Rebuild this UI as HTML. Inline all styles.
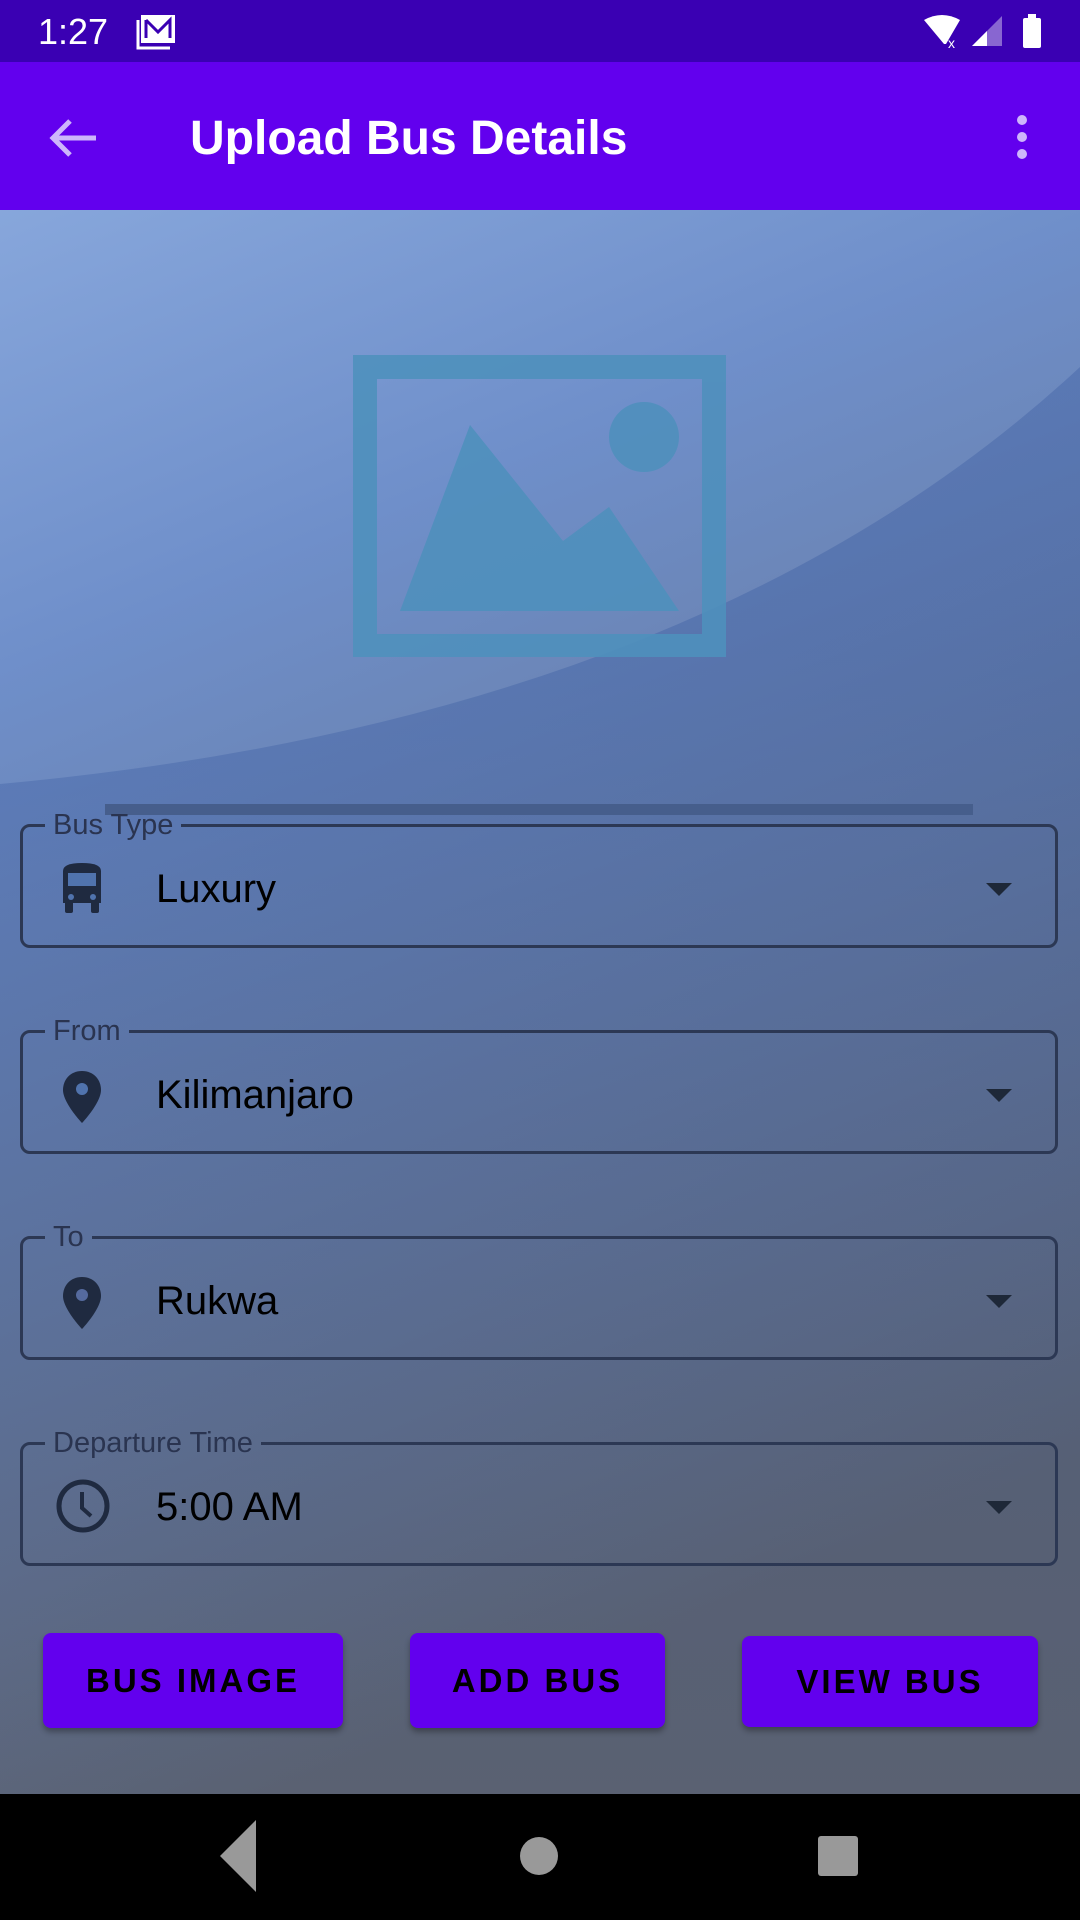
<!DOCTYPE html>
<html><head><meta charset="utf-8"><style>
*{margin:0;padding:0;box-sizing:border-box}
body{width:1080px;height:1920px;position:relative;overflow:hidden;font-family:"Liberation Sans",sans-serif;background:#000}
.abs{position:absolute}
.field{position:absolute;left:20px;width:1038px;height:123px}
fieldset{position:absolute;left:0;right:0;top:-17px;bottom:0;border:3px solid #2c3854;border-radius:10px;padding:0 20px}
legend{padding:0 8px;font-size:29px;color:#2a3450;line-height:34px;margin-left:2px}
.val{position:absolute;left:136px;top:41px;font-size:40px;color:#000;line-height:46px}
.arr{position:absolute;left:966px;top:58px;width:0;height:0;border-left:13px solid transparent;border-right:13px solid transparent;border-top:13px solid #1e2838}
.ic{position:absolute;left:39px;top:38px}
.btn{position:absolute;background:#6200ee;border-radius:8px;box-shadow:0 4px 6px rgba(0,0,0,.3);color:#000;font-size:33px;font-weight:bold;letter-spacing:3px;display:flex;align-items:center;justify-content:center}
</style></head><body>
<svg class="abs" style="left:0;top:0" width="1080" height="1794">
<defs><linearGradient id="g" x1="0" y1="0" x2="0.25" y2="1">
<stop offset="0" stop-color="#92b1e3"/><stop offset="0.35" stop-color="#6f8fca"/><stop offset="1" stop-color="#5c6270"/></linearGradient>
<linearGradient id="o" x1="0" y1="0" x2="0" y2="1"><stop offset="0.2" stop-color="#2c4f9a" stop-opacity="0.3"/><stop offset="1" stop-color="#2c4f9a" stop-opacity="0.05"/></linearGradient></defs>
<rect width="1080" height="1794" fill="url(#g)"/>
<path d="M0,784 Q700,720 1080,367 L1080,1794 L0,1794Z" fill="url(#o)"/>
</svg>
<div class="abs" style="left:0;top:0;width:1080px;height:62px;background:#3a00b3"></div>
<div class="abs" style="left:38px;top:10px;font-size:36px;color:#fff;line-height:44px">1:27</div>
<svg class="abs" style="left:136px;top:15px" width="42" height="36"><rect x="5" y="0" width="34" height="28" fill="#fff"/><path d="M10,5 L10,23 M10,5 L22,17 L34,5 L34,23" stroke="#3a00b3" stroke-width="3" fill="none"/><path d="M2,5 L2,33 L34,33" stroke="#fff" stroke-width="3" fill="none"/></svg>
<svg class="abs" style="left:922px;top:14px" width="120" height="36"><path d="M2,6 Q20,-4 38,6 L24,30 L22,30Z" fill="#fff"/><text x="26" y="34" font-size="14" fill="#fff" font-family="Liberation Sans">x</text><path d="M50,32 L80,2 L80,32Z" fill="#fff" opacity="0.4"/><path d="M50,32 L65,17 L65,32Z" fill="#fff"/><rect x="101" y="4" width="18" height="30" rx="2" fill="#fff"/><rect x="106" y="0" width="8" height="5" fill="#fff"/></svg>
<div class="abs" style="left:0;top:62px;width:1080px;height:148px;background:#6200ee"></div>
<svg class="abs" style="left:48px;top:118px" width="52" height="40"><path d="M4,20 L48,20 M22,3 L5,20 L22,37" stroke="#cdb6fb" stroke-width="5" fill="none"/></svg>
<div class="abs" style="left:190px;top:109px;font-size:48px;font-weight:bold;color:#fff;line-height:60px">Upload Bus Details</div>
<svg class="abs" style="left:1012px;top:114px" width="20" height="46"><circle cx="10" cy="6" r="5" fill="#cdb6fb"/><circle cx="10" cy="23" r="5" fill="#cdb6fb"/><circle cx="10" cy="40" r="5" fill="#cdb6fb"/></svg>
<svg class="abs" style="left:0;top:0" width="1080" height="700"><g fill="#4f90bd" opacity="0.9">
<path fill-rule="evenodd" d="M353,355 H726 V657 H353Z M377,379 V634 H702 V379Z"/>
<path d="M400,611 L470,425 L563,541 L609,507 L679,611Z"/><circle cx="644" cy="437" r="35"/></g></svg>
<div class="abs" style="left:105px;top:804px;width:868px;height:11px;background:#465e8c"></div>
<div class="field" style="top:825px"><fieldset><legend>Bus Type</legend></fieldset>
<svg class="ic" width="46" height="52" viewBox="0 0 46 52"><path d="M4,8 Q4,0 23,0 Q42,0 42,8 V40 H4Z" fill="#1f2a40"/><rect x="9" y="10" width="28" height="13" fill="#5073ad"/><circle cx="12" cy="34" r="3" fill="#5073ad"/><circle cx="34" cy="34" r="3" fill="#5073ad"/><rect x="6" y="38" width="8" height="12" rx="2" fill="#1f2a40"/><rect x="32" y="38" width="8" height="12" rx="2" fill="#1f2a40"/></svg>
<div class="val">Luxury</div><div class="arr"></div></div>
<div class="field" style="top:1031px"><fieldset><legend>From</legend></fieldset>
<svg class="ic" width="46" height="56" viewBox="0 0 46 56"><path d="M23,2 C11,2 4,11 4,21 C4,34 23,54 23,54 C23,54 42,34 42,21 C42,11 35,2 23,2Z" fill="#1f2a40"/><circle cx="23" cy="20" r="6" fill="#5073ad"/></svg>
<div class="val">Kilimanjaro</div><div class="arr"></div></div>
<div class="field" style="top:1237px"><fieldset><legend>To</legend></fieldset>
<svg class="ic" width="46" height="56" viewBox="0 0 46 56"><path d="M23,2 C11,2 4,11 4,21 C4,34 23,54 23,54 C23,54 42,34 42,21 C42,11 35,2 23,2Z" fill="#1f2a40"/><circle cx="23" cy="20" r="6" fill="#556a9e"/></svg>
<div class="val">Rukwa</div><div class="arr"></div></div>
<div class="field" style="top:1443px"><fieldset><legend>Departure Time</legend></fieldset>
<svg class="ic" width="56" height="56" style="left:35px;top:35px"><circle cx="28" cy="28" r="24" stroke="#1f2a40" stroke-width="5" fill="none"/><path d="M27,14 V30 L36,38" stroke="#1f2a40" stroke-width="4" fill="none"/></svg>
<div class="val">5:00 AM</div><div class="arr"></div></div>
<div class="btn" style="left:43px;top:1633px;width:300px;height:95px">BUS IMAGE</div>
<div class="btn" style="left:410px;top:1633px;width:255px;height:95px">ADD BUS</div>
<div class="btn" style="left:742px;top:1636px;width:296px;height:91px">VIEW BUS</div>
<div class="abs" style="left:0;top:1794px;width:1080px;height:126px;background:#000"></div>
<svg class="abs" style="left:0;top:1794px" width="1080" height="126"><path d="M220,62 L256,26 V98Z" fill="#999"/><circle cx="539" cy="62" r="19" fill="#999"/><rect x="818" y="42" width="40" height="40" rx="3" fill="#999"/></svg>
</body></html>
